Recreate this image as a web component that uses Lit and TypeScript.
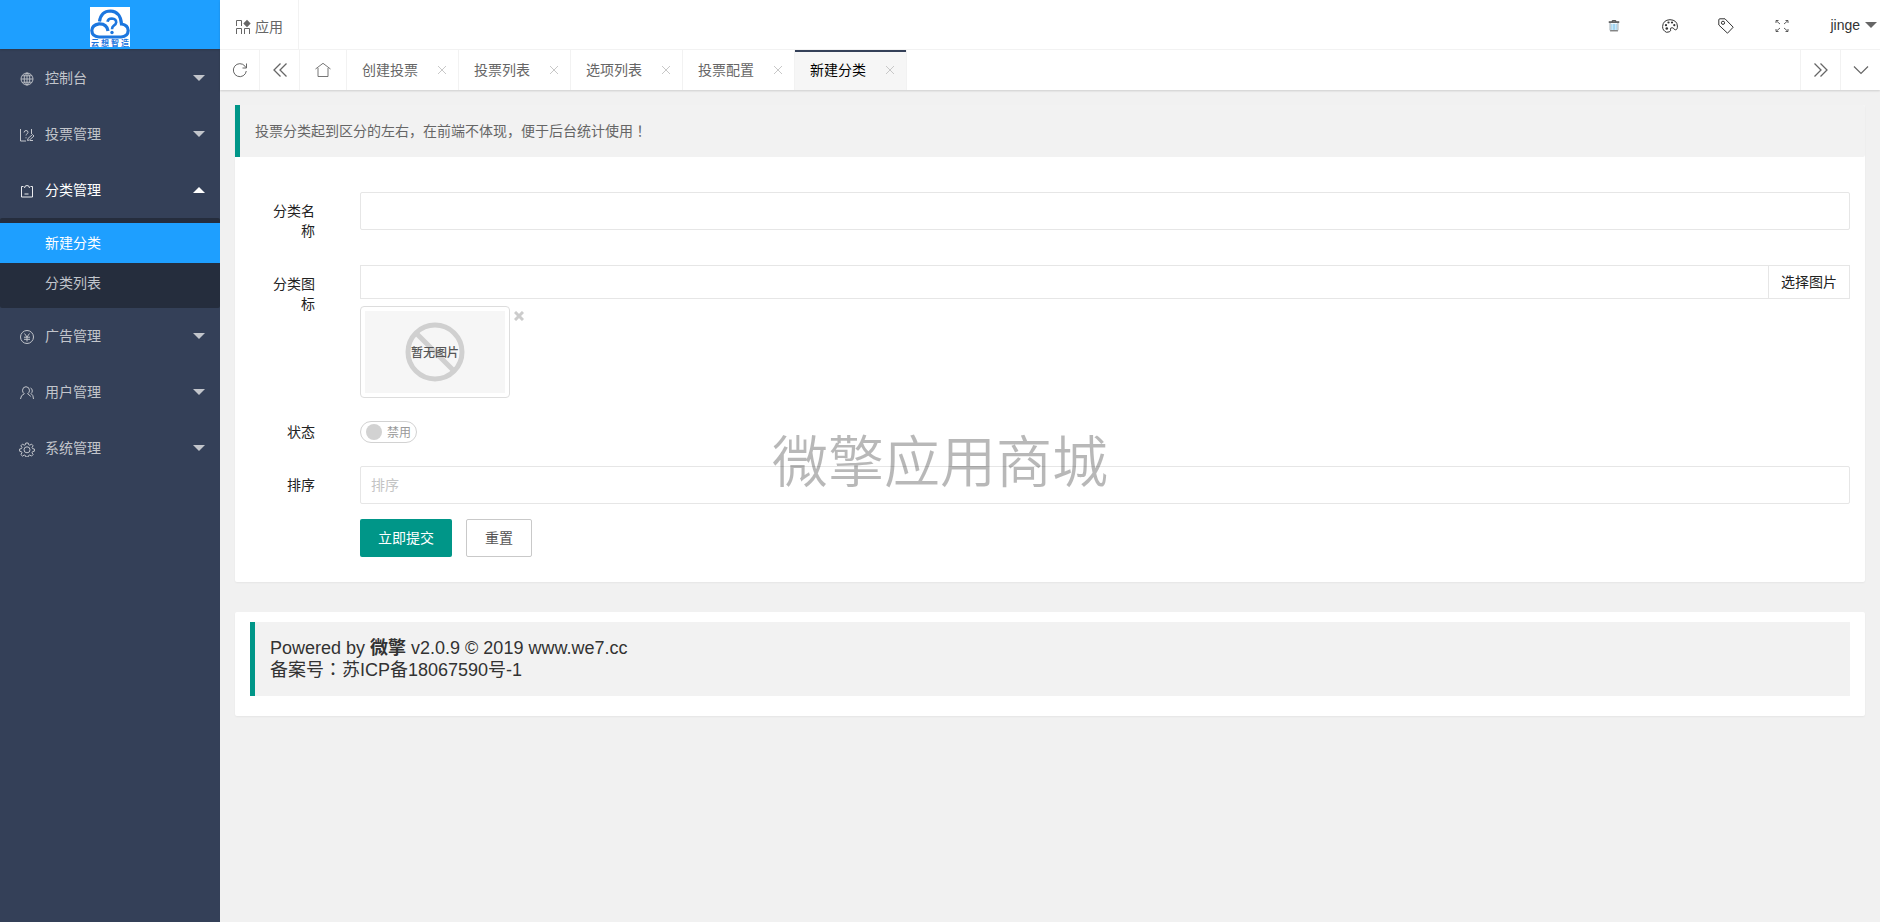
import { LitElement, html, css, svg, nothing, type TemplateResult } from "lit";
import { customElement, property, state } from "lit/decorators.js";
import { classMap } from "lit/directives/class-map.js";

const icons: Record<string, TemplateResult> = {
  globe: svg`<g stroke-width=".9"><circle cx="8" cy="8" r="6"/><ellipse cx="8" cy="8" rx="2.800" ry="6"/><path d="M8 2v12M2 8h12M3.200 4.800h9.600M3.200 11.200h9.600"/></g>`,
  vote: svg`<path d="M1.500 2v12H7M12.500 2v5M5 5.500q.3-2 2-2 2 0 2 1.800-.1 1-1.100 1.700-.9.500-.9 1.500M7 10.300v1M8.500 13.500l.5-2 4.500-4 1.500 1.500-4.500 4zM11 13.500h3"/>`,
  clipboard: svg`<g stroke-width=".9"><path d="M4.500 3.500h-2v10.500h11V3.500h-2M5.500 5q0-2.500 2.500-2.500t2.500 2.500"/><path d="M5.500 11h4"/></g>`,
  yen: svg`<circle cx="8" cy="8" r="6.500"/><path d="M5.500 4.500L8 8l2.500-3.500M8 8v4.500M5 8.200h6M5 10.300h6"/>`,
  user: svg`<path d="M1.500 14q.3-4 3.800-5.200Q3.500 7.500 3.500 5.200 3.800 1.800 7 1.700q3.300.2 3.500 3.500 0 2.300-1.900 3.600 2 .8 2.900 2.700M11.500 3q2 .8 1.800 3-.1 1.600-1.300 2.500 2.500 1.500 2.500 5.500"/>`,
  gear: svg`<circle cx="8" cy="8.800" r="3"/><path d="M6.800 2h2.400l.4 1.700 1.200.5 1.700-1.100 1.600 1.700-1.100 1.700.5 1.100 1.900.4v2.200l-1.900.5-.5 1.100 1.100 1.700-1.600 1.600-1.700-1.100-1.200.5-.4 1.400H6.800l-.4-1.400-1.200-.5-1.700 1.100-1.600-1.600L3 11.800l-.5-1.100L.6 10.200V8l1.900-.4L3 6.500 1.900 4.800l1.600-1.700 1.700 1.100 1.200-.5z"/>`,
  apps: svg`<path d="M1.500 7V1.500h5V7M1.500 15V9.500h5V15M9.500 15V9.500h5V15"/><path d="M12 .8L15.700 4.500 12 8.200 8.300 4.500z" fill="currentColor" stroke="none"/>`,
  refresh: svg`<path d="M14.300 9A6.500 6.500 0 1 1 13 4.200L14.500 6M14.500 1.500V6H10.500"/>`,
  left: svg`<path d="M8.500 1.500L2 8l6.500 6.500M14.500 1.500L8 8l6.500 6.500" stroke-width="1.300"/>`,
  right: svg`<path d="M1.500 1.500L8 8l-6.500 6.500M7.500 1.500L14 8l-6.500 6.500" stroke-width="1.300"/>`,
  down: svg`<path d="M1 4.500l7 7 7-7" stroke-width="1.200"/>`,
  home: svg`<path d="M.5 7L8 1.300 15.500 7M3 6v8.500h10V6" stroke-width=".9"/>`,
  trash: svg`<path d="M2 3.500h12" stroke-width="1.600"/><path d="M6 3V1.800h4V3M3.500 13.500h9"/><path d="M3.500 4.500v8.500M12.500 4.500v8.500" stroke="#8a9aa5"/><path d="M5.500 5.500v7M7.200 5.500v7M8.800 5.500v7M10.500 5.500v7" stroke="#7cc4ea"/>`,
  palette: svg`<path d="M4.500 14.300Q.5 12.500.6 8.500 1 2 8 1.700q7 .3 7.400 6.300.1 4-2 3.800-1.300-.1-1.600-1.300-1.800-1.500-3.100-.3-.7 1 .1 2-.5 2.200-4.300 2.100z"/><g fill="currentColor" stroke="none"><circle cx="4" cy="7.200" r="1.100"/><circle cx="6.500" cy="4.500" r="1.100"/><circle cx="10" cy="4.500" r="1.100"/><circle cx="12.300" cy="7.200" r="1.100"/><circle cx="4.800" cy="10.500" r="1.300"/></g>`,
  tag: svg`<path d="M.8 1.800Q.8.800 2 .8h5l8.200 8.400-5.700 6L.8 7z"/><circle cx="5" cy="4.800" r="1.600"/>`,
  full: svg`<path d="M2 5V2.500h2.500M2.500 3l3.500 3M14 5V2.500h-2.500M13.500 3L10 6M2 11v2.500h2.500M2.500 13L6 10M14 11v2.500h-2.500M13.500 13L10 10" stroke-width=".8"/>`,
  close: svg`<path d="M4 4l8 8M12 4l-8 8"/>`,
};

@customElement("line-icon")
class LineIcon extends LitElement {
  @property() name = "";
  @property({ type: Number }) size = 16;
  static styles = css`
    :host { display: inline-flex; flex: none; }
    svg { display: block; fill: none; stroke: currentColor; }
  `;
  render() {
    return html`<svg width=${this.size} height=${this.size} viewBox="0 0 16 16" aria-hidden="true">${icons[this.name]}</svg>`;
  }
}

@customElement("side-menu")
class SideMenu extends LitElement {
  @state() private open = "分类管理";

  private items = [
    { label: "控制台", icon: "globe" },
    { label: "投票管理", icon: "vote" },
    { label: "分类管理", icon: "clipboard", children: ["新建分类", "分类列表"] },
    { label: "广告管理", icon: "yen" },
    { label: "用户管理", icon: "user" },
    { label: "系统管理", icon: "gear" },
  ];

  static styles = css`
    :host { display: block; background: #344058; color: #c2c5cb; }
    .logo {
      display: flex; align-items: center; justify-content: center;
      height: 49px; padding-top: 5px; box-sizing: border-box;
      background: #1e9fff; box-shadow: 0 1px 2px rgba(0, 0, 0, .15);
      margin-bottom: 1px;
    }
    .logo svg { display: block; background: #fff; }
    .mark { font: bold 8px "Noto Sans CJK SC", sans-serif; fill: #1c76df; }
    .top {
      display: flex; align-items: center; gap: 10px; width: 100%; height: 56px;
      padding: 0 15px 0 19px; border: 0; background: none; color: inherit;
      font: inherit; text-align: left; cursor: pointer;
    }
    .top.open { color: #fff; }
    .name { flex: 1; }
    .arrow { border: 6px solid transparent; border-top-color: currentColor; border-bottom: 0; }
    .open .arrow { border-top: 0; border-bottom: 6px solid currentColor; }
    .top line-icon { padding-top: 2px; }
    .sub { background: #252d3d; padding: 5px 0; border-radius: 2px; }
    .sub a {
      display: block; line-height: 40px; padding-left: 45px;
      color: inherit; text-decoration: none;
    }
    .sub a.on { background: #1e9fff; color: #fff; }
  `;

  render() {
    return html`
      <div class="logo">
        <svg width="40" height="40" viewBox="0 0 40 40" role="img" aria-label="云想智造">
          <path d="M18 24Q17 16.500 9 16.800 2 18 1.800 23.500 2 29.500 9 30H31q7-.5 7.200-6.500Q38 18 31.500 17 30.500 4.500 20.500 4 11 4 9.500 14.500"
            fill="none" stroke="#1c76df" stroke-width="3.200"/>
          <path d="M17.500 14.800q.5-3.300 4.400-3.300 4.300.2 4.300 3.800-.2 2-2.400 3.400-1.800 1.200-1.800 3.600" fill="none" stroke="#1c76df" stroke-width="2.600"/>
          <circle cx="22" cy="25.500" r="1.700" fill="#1c76df"/>
          ${["云", "想", "智", "造"].map((c, i) => svg`<text class="mark" x=${1 + i * 10} y="38.500">${c}</text>`)}
        </svg>
      </div>
      <nav>
        ${this.items.map((it) => {
          const open = it.label === this.open;
          return html`
            <button class=${classMap({ top: true, open })} aria-expanded=${open}
              @click=${() => (this.open = open ? "" : it.label)}>
              <line-icon name=${it.icon}></line-icon>
              <span class="name">${it.label}</span><span class="arrow"></span>
            </button>
            ${open && it.children
              ? html`<div class="sub">${it.children.map((c, i) => html`<a href="#" class=${i === 0 ? "on" : ""}>${c}</a>`)}</div>`
              : nothing}`;
        })}
      </nav>`;
  }
}

@customElement("top-bar")
class TopBar extends LitElement {
  static styles = css`
    :host { display: block; background: #fff; color: #666; position: relative; box-shadow: 0 1px 2px rgba(0, 0, 0, .15); }
    a { color: inherit; text-decoration: none; }
    button { border: 0; padding: 0; background: none; color: inherit; font: inherit; cursor: pointer; display: flex; align-items: center; justify-content: center; }
    .bar { display: flex; height: 49px; border-bottom: 1px solid #f2f2f2; }
    .apps { display: flex; align-items: center; gap: 4px; padding: 4px 15px 0 15px; border-right: 1px solid #f2f2f2; }
    .tools { display: flex; margin-left: auto; color: #333; }
    .tool { width: 56px; padding-top: 3px; }
    .account { gap: 5px; padding: 0 3px 0 20px; }
    .caret { border: 6px solid transparent; border-top-color: #666; border-bottom: 0; }
    .tabs { display: flex; height: 40px; }
    .step { width: 39px; border-right: 1px solid #f2f2f2; box-sizing: content-box; }
    .home { width: 46px; }
    .end { border-right: 0; border-left: 1px solid #f2f2f2; }
    .push { margin-left: auto; }
    .tab { display: flex; align-items: center; justify-content: space-between; width: 112px; padding: 0 8px 0 15px; box-sizing: border-box; border-right: 1px solid #f2f2f2; }
    .tab button { color: #c8c8c8; }
    .tab.on { background: #f6f6f6; color: #000; box-shadow: inset 0 2px #344058; }
  `;
  render() {
    return html`
      <div class="bar">
        <a class="apps" href="#"><line-icon name="apps" size="16"></line-icon>应用</a>
        <div class="tools">
          ${[["trash", "清除缓存", 14], ["palette", "主题", 16], ["tag", "便签", 16], ["full", "全屏", 16]].map(
            ([n, l, s]) => html`<button class="tool" aria-label=${l}><line-icon name=${n} size=${s}></line-icon></button>`
          )}
          <button class="account">jinge<span class="caret"></span></button>
        </div>
      </div>
      <div class="tabs">
        <button class="step" aria-label="刷新"><line-icon name="refresh"></line-icon></button>
        <button class="step" aria-label="向左"><line-icon name="left"></line-icon></button>
        <button class="step home" aria-label="首页"><line-icon name="home"></line-icon></button>
        ${["创建投票", "投票列表", "选项列表", "投票配置", "新建分类"].map(
          (t, i) => html`<div class=${classMap({ tab: true, on: i === 4 })}>
            <a href="#">${t}</a><button aria-label="关闭"><line-icon name="close" size="16"></line-icon></button>
          </div>`
        )}
        <button class="step end push" aria-label="向右"><line-icon name="right"></line-icon></button>
        <button class="step end" aria-label="更多"><line-icon name="down"></line-icon></button>
      </div>`;
  }
}

@customElement("category-form")
class CategoryForm extends LitElement {
  static styles = css`
    :host { display: block; background: #fff; border-radius: 2px; box-shadow: 0 1px 2px rgba(0, 0, 0, .05); color: #222; }
    .note { margin: 0; padding: 15px; line-height: 22px; border-left: 5px solid #009688; background: #f2f2f2; color: #666; border-radius: 0 2px 2px 0; }
    .mid { font-family: "Noto Sans CJK TC", sans-serif; line-height: 1; }
    form { display: flex; flex-direction: column; gap: 15px; padding: 35px 15px 25px; }
    .row { display: flex; gap: 30px; }
    .label { flex: none; width: 80px; box-sizing: border-box; padding: 9px 15px; line-height: 20px; text-align: right; }
    .field { flex: 1; min-width: 0; }
    input, button { font: inherit; color: inherit; box-sizing: border-box; }
    .text { display: block; width: 100%; height: 38px; padding: 0 10px; border: 1px solid #e6e6e6; border-radius: 2px; background: #fff; outline: 0; }
    .text::placeholder { color: #c4c4c4; opacity: 1; }
    .group { display: flex; margin-bottom: 7px; }
    .group .text { height: 34px; border-radius: 0; border-right: 0; }
    .pick { flex: none; height: 34px; padding: 0 12px; border: 1px solid #e6e6e6; background: #fff; }
    .preview { display: flex; align-items: flex-start; gap: 4px; }
    .frame { padding: 4px; border: 1px solid #ddd; border-radius: 4px; }
    .frame svg { display: block; background: #f6f6f6; }
    .none { font: 500 12px "Noto Sans CJK SC", sans-serif; fill: #555; text-anchor: middle; }
    .remove { border: 0; padding: 5px 0; background: none; color: #ccc; }
    .remove svg { display: block; }
    .middle { display: flex; align-items: center; }
    .switch { display: flex; align-items: center; gap: 5px; height: 22px; box-sizing: border-box; padding: 0 5px; border: 1px solid #d2d2d2; border-radius: 20px; font-size: 12px; line-height: 22px; color: #999; }
    .switch input { appearance: none; width: 16px; height: 16px; margin: 0; border-radius: 50%; background: #d2d2d2; }
    .switch span { padding-top: 2px; }
    .actions { display: flex; gap: 14px; padding-left: 110px; }
    .btn { height: 38px; padding: 0 18px; border: 0; border-radius: 2px; background: #009688; color: #fff; }
    .plain { border: 1px solid #c9c9c9; background: #fff; color: #555; }
  `;
  render() {
    return html`
      <p class="note">投票分类起到区分的左右，在前端不体现，便于后台统计使用<span class="mid">！</span></p>
      <form @submit=${(e: Event) => e.preventDefault()}>
        <div class="row">
          <label class="label" for="name">分类名称</label>
          <div class="field"><input class="text" id="name" type="text"></div>
        </div>
        <div class="row">
          <label class="label" for="icon">分类图标</label>
          <div class="field">
            <div class="group"><input class="text" id="icon" type="text"><button class="pick" type="button">选择图片</button></div>
            <div class="preview">
              <div class="frame">
                <svg width="140" height="82" viewBox="0 0 140 82" role="img" aria-label="暂无图片">
                  <g fill="none" stroke="#d0d0d0" stroke-width="5"><circle cx="70" cy="41" r="27"/><path d="M51 22l38 38"/></g>
                  <text class="none" x="70" y="46">暂无图片</text>
                </svg>
              </div>
              <button class="remove" type="button" aria-label="删除">
                <svg width="10" height="10" viewBox="0 0 10 10"><path d="M1 1l8 8M9 1l-8 8" stroke="currentColor" stroke-width="3"/></svg>
              </button>
            </div>
          </div>
        </div>
        <div class="row">
          <label class="label" for="status">状态</label>
          <div class="middle"><label class="switch"><input id="status" type="checkbox" role="switch"><span>禁用</span></label></div>
        </div>
        <div class="row">
          <label class="label" for="sort">排序</label>
          <div class="field"><input class="text" id="sort" type="text" placeholder="排序"></div>
        </div>
        <div class="actions">
          <button class="btn" type="submit">立即提交</button>
          <button class="btn plain" type="reset">重置</button>
        </div>
      </form>`;
  }
}

@customElement("app-root")
class AppRoot extends LitElement {
  static styles = css`
    :host {
      display: grid; grid-template-columns: 220px minmax(0, 1fr); min-height: 100vh;
      background: #f1f1f1; color: #333;
      font: 14px/20px "Liberation Sans", "Noto Sans CJK SC", sans-serif;
    }
    .body { display: flex; flex-direction: column; gap: 30px; padding: 15px; }
    .card { background: #fff; border-radius: 2px; padding: 10px 15px 20px; box-shadow: 0 1px 2px rgba(0, 0, 0, .05); }
    .power { padding: 15px; border-left: 5px solid #009688; background: #f2f2f2; font-size: 18px; line-height: 22px; }
    .power p { margin: 0; }
    .mid { font-family: "Noto Sans CJK TC", sans-serif; line-height: 1; }
    .water {
      position: fixed; inset: 0; display: flex; align-items: center; justify-content: center;
      padding-bottom: 6px; pointer-events: none; color: rgba(0, 0, 0, .28);
      font: 350 56px/60px "Noto Sans CJK SC", sans-serif;
    }
  `;
  render() {
    return html`
      <side-menu></side-menu>
      <div>
        <top-bar></top-bar>
        <main class="body">
          <category-form></category-form>
          <footer class="card">
            <div class="power">
              <p>Powered by <b>微擎</b> v2.0.9 © 2019 www.we7.cc</p>
              <p>备案号<span class="mid">：</span>苏ICP备18067590号-1</p>
            </div>
          </footer>
        </main>
      </div>
      <div class="water">微擎应用商城</div>`;
  }
}
